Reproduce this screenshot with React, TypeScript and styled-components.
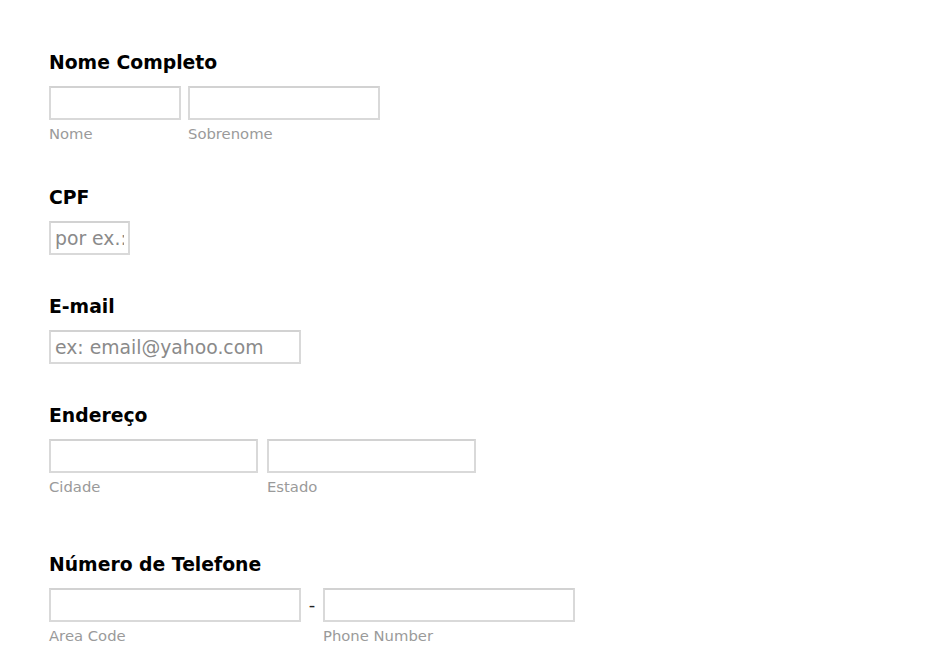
import React from "react";
import styled, { createGlobalStyle } from "styled-components";

const Global = createGlobalStyle`
  html, body { margin: 0; padding: 0; background: #fff; }
  body { font-family: "DejaVu Sans", Verdana, sans-serif; }
`;

const Form = styled.div`
  padding: 50px 0 0 49px;
  display: flex;
  flex-direction: column;
`;

const Section = styled.div<{ $gap: number }>`
  display: flex;
  flex-direction: column;
  margin-bottom: ${(p) => p.$gap}px;
`;

const Label = styled.div`
  font-size: 18.8px;
  font-weight: bold;
  color: #000;
  line-height: 26px;
  margin-bottom: 10px;
`;

const Row = styled.div`
  display: flex;
  align-items: flex-start;
`;

const Field = styled.div<{ $mr: number }>`
  display: flex;
  flex-direction: column;
  margin-right: ${(p) => p.$mr}px;
`;

const Input = styled.input<{ $w: number }>`
  box-sizing: border-box;
  width: ${(p) => p.$w}px;
  height: 34px;
  border: 2px solid #d9d9d9;
  border-top-color: #d2d2d2;
  background: #fff;
  padding: 0 4px;
  margin: 0;
  font-family: "DejaVu Sans", Verdana, sans-serif;
  font-size: 18.8px;
  color: #333;
  outline: none;
  &::placeholder { color: #8a8a8a; }
`;

const Sub = styled.div`
  font-size: 14.8px;
  color: #9a9a9a;
  line-height: 18px;
  margin-top: 5px;
`;

const Dash = styled.span`
  font-size: 18px;
  color: #222;
  width: 22px;
  text-align: center;
  line-height: 34px;
`;

export default function App() {
  return (
    <>
      <Global />
      <Form>
        <Section $gap={42}>
          <Label>Nome Completo</Label>
          <Row>
            <Field $mr={7}>
              <Input $w={132} />
              <Sub>Nome</Sub>
            </Field>
            <Field $mr={0}>
              <Input $w={192} />
              <Sub>Sobrenome</Sub>
            </Field>
          </Row>
        </Section>
        <Section $gap={39}>
          <Label>CPF</Label>
          <Row>
            <Input $w={81} placeholder="por ex.: 000.000.000-00" />
          </Row>
        </Section>
        <Section $gap={39}>
          <Label>E-mail</Label>
          <Row>
            <Input $w={252} placeholder="ex: email@yahoo.com" />
          </Row>
        </Section>
        <Section $gap={56}>
          <Label>Endereço</Label>
          <Row>
            <Field $mr={9}>
              <Input $w={209} />
              <Sub>Cidade</Sub>
            </Field>
            <Field $mr={0}>
              <Input $w={209} />
              <Sub>Estado</Sub>
            </Field>
          </Row>
        </Section>
        <Section $gap={0}>
          <Label>Número de Telefone</Label>
          <Row>
            <Field $mr={0}>
              <Input $w={252} />
              <Sub>Area Code</Sub>
            </Field>
            <Dash>-</Dash>
            <Field $mr={0}>
              <Input $w={252} />
              <Sub>Phone Number</Sub>
            </Field>
          </Row>
        </Section>
      </Form>
    </>
  );
}
